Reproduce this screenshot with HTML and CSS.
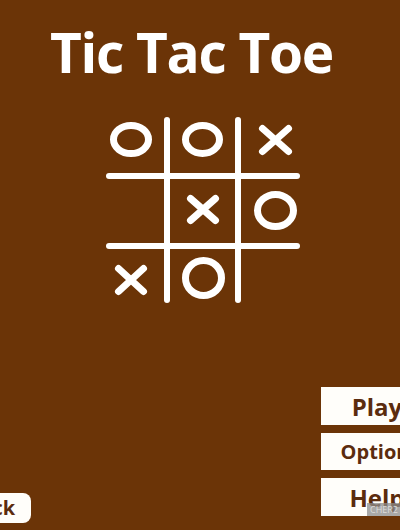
FILE: index.html
```html
<!DOCTYPE html>
<html lang="en">
<head>
    <meta charset="UTF-8">
    <meta name="viewport" content="width=device-width, initial-scale=1.0">
    <title>Tic Tac Toe</title>
    <link rel="stylesheet" href="styles.css">
</head>
<body>
    <div class="screen">
        <h1 class="title">Tic Tac Toe</h1>

        <svg class="board" width="200" height="190" viewBox="0 0 200 190">
            <g stroke="#fff" stroke-width="6" stroke-linecap="round" fill="none">
                <line x1="63" y1="6" x2="63" y2="186"/>
                <line x1="134" y1="6" x2="134" y2="186"/>
                <line x1="5" y1="62" x2="193" y2="62"/>
                <line x1="5" y1="132" x2="193" y2="132"/>
            </g>
            <g stroke="#fff" stroke-width="7" stroke-linecap="round" fill="none">
                <!-- noughts -->
                <ellipse cx="27" cy="25.5" rx="17.5" ry="14"/>
                <ellipse cx="98.5" cy="25.5" rx="17" ry="14"/>
                <ellipse cx="171.5" cy="96.5" rx="18" ry="16"/>
                <ellipse cx="99.5" cy="164" rx="18" ry="17.5"/>
                <!-- crosses -->
                <path d="M158.5 14.5 L184.5 37.5 M184.5 14.5 L158.5 37.5"/>
                <path d="M86.5 84.5 L111.5 106.5 M111.5 84.5 L86.5 106.5"/>
                <path d="M14.5 154.5 L39.5 177.5 M39.5 154.5 L14.5 177.5"/>
            </g>
        </svg>

        <div class="footer">
            <button class="back-btn">Back</button>
            <div class="menu">
                <button class="menu-btn">Play</button>
                <button class="menu-btn small">Options</button>
                <button class="menu-btn">Help</button>
            </div>
        </div>

        <div class="watermark">CHER2</div>
    </div>
</body>
</html>
```

FILE: styles.css
```css
html, body {
    margin: 0;
    padding: 0;
    overflow: hidden;
}
body {
    background-color: #6b3407;
    font-family: "Open Sans", "Liberation Sans", sans-serif;
}
.screen {
    position: relative;
    width: 400px;
    height: 530px;
    display: flex;
    flex-direction: column;
    overflow: hidden;
}
.title {
    margin: 24px 0 0 50px;
    font-size: 55px;
    line-height: 1;
    font-weight: 700;
    letter-spacing: -1.3px;
    color: #fff;
    white-space: nowrap;
}
.board {
    display: block;
    margin: 35px 0 0 104px;
}
.footer {
    flex: 1;
    display: flex;
    justify-content: space-between;
    align-items: flex-end;
}
.back-btn {
    margin: 0 0 7px -43px;
    height: 30px;
    padding: 0 16px 0 10px;
    border: none;
    border-radius: 8px;
    background-color: #fffefa;
    color: #5b2c0e;
    font-family: inherit;
    font-size: 20px;
    font-weight: 700;
    line-height: 30px;
}
.menu {
    display: flex;
    flex-direction: column;
    gap: 8px;
    margin-bottom: 14px;
    margin-right: -33px;
}
.menu-btn {
    width: 112px;
    height: 38px;
    padding: 0;
    border: none;
    background-color: #fffefa;
    color: #5b2c0e;
    font-family: inherit;
    font-size: 24px;
    font-weight: 700;
    text-align: center;
}
.menu-btn.small {
    height: 37px;
    font-size: 20px;
    padding-left: 6px;
}
.watermark {
    position: absolute;
    right: 0;
    bottom: 14px;
    width: 33px;
    height: 13px;
    background: rgba(140, 140, 140, 0.75);
    color: #ddd;
    font-size: 9px;
    line-height: 13px;
    padding-left: 3px;
    box-sizing: border-box;
    overflow: hidden;
}
```
